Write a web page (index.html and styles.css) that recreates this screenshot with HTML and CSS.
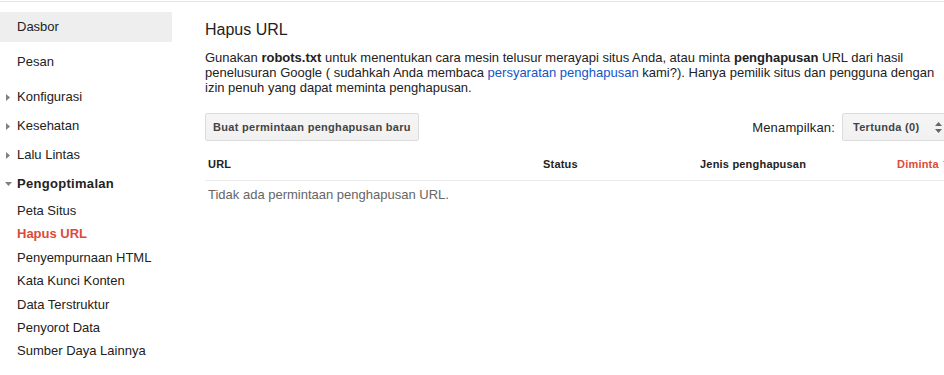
FILE: index.html
```html
<!DOCTYPE html>
<html lang="id">
<head>
<meta charset="utf-8">
<title>Hapus URL</title>
<link rel="stylesheet" href="styles.css">
</head>
<body>
<div class="topline"></div>
<div class="layout">
  <nav class="sidebar">
    <div class="nav-top active">Dasbor</div>
    <div class="nav-top">Pesan</div>
    <div class="nav-sec"><span class="tri"><svg width="4" height="7" viewBox="0 0 4 7"><path d="M0 0L4 3.5L0 7Z" fill="#808080"/></svg></span>Konfigurasi</div>
    <div class="nav-sec"><span class="tri"><svg width="4" height="7" viewBox="0 0 4 7"><path d="M0 0L4 3.5L0 7Z" fill="#808080"/></svg></span>Kesehatan</div>
    <div class="nav-sec"><span class="tri"><svg width="4" height="7" viewBox="0 0 4 7"><path d="M0 0L4 3.5L0 7Z" fill="#808080"/></svg></span>Lalu Lintas</div>
    <div class="nav-sec open"><span class="tri down"><svg width="7" height="4" viewBox="0 0 7 4"><path d="M0 0L7 0L3.5 4Z" fill="#808080"/></svg></span>Pengoptimalan</div>
    <div class="nav-sub">Peta Situs</div>
    <div class="nav-sub current">Hapus URL</div>
    <div class="nav-sub">Penyempurnaan HTML</div>
    <div class="nav-sub">Kata Kunci Konten</div>
    <div class="nav-sub">Data Terstruktur</div>
    <div class="nav-sub">Penyorot Data</div>
    <div class="nav-sub">Sumber Daya Lainnya</div>
  </nav>
  <main class="main">
    <h1 class="title">Hapus URL</h1>
    <p class="intro">Gunakan <b>robots.txt</b> untuk menentukan cara mesin telusur merayapi situs Anda, atau minta <b>penghapusan</b> URL dari hasil penelusuran Google ( sudahkah Anda membaca <a href="#">persyaratan penghapusan</a> kami?). Hanya pemilik situs dan pengguna dengan izin penuh yang dapat meminta penghapusan.</p>
    <div class="toolbar">
      <button class="btn">Buat permintaan penghapusan baru</button>
      <div class="filter">
        <span class="filter-label">Menampilkan:</span>
        <div class="select"><span>Tertunda (0)</span><svg class="updown" width="7" height="11" viewBox="0 0 7 11"><path d="M0 4L3.5 0L7 4Z M0 7L7 7L3.5 11Z" fill="#666"/></svg></div>
      </div>
    </div>
    <div class="table">
      <div class="row head">
        <div class="cell c1">URL</div>
        <div class="cell c2">Status</div>
        <div class="cell c3">Jenis penghapusan</div>
        <div class="cell c4 sorted">Diminta <svg class="sort" width="9" height="5" viewBox="0 0 9 5"><path d="M0 0L9 0L4.5 5Z" fill="#dd4b39"/></svg></div>
      </div>
      <div class="empty">Tidak ada permintaan penghapusan URL.</div>
    </div>
  </main>
</div>
</body>
</html>
```
FILE: styles.css
```css
html, body {
  margin: 0;
  padding: 0;
  background: #fff;
  overflow: hidden;
}
body {
  font-family: Arial, "Liberation Sans", sans-serif;
  font-size: 13px;
  color: #222;
  width: 944px;
  height: 375px;
}
.topline {
  height: 1px;
  margin-top: 1px;
  background: #e5e5e5;
}
.layout {
  display: grid;
  grid-template-columns: 172px 760px;
  column-gap: 33px;
}
.sidebar {
  padding-top: 10px;
}
.nav-top {
  height: 30px;
  line-height: 30px;
  padding-left: 17px;
  margin-bottom: 5px;
}
.nav-top.active {
  background: #eeeeee;
}
.nav-sec {
  height: 29px;
  line-height: 29px;
  display: flex;
  align-items: center;
}
.nav-sec.open {
  font-weight: bold;
  letter-spacing: 0.3px;
  margin-bottom: 1px;
}
.tri {
  width: 17px;
  padding-left: 6px;
  box-sizing: border-box;
  display: flex;
  align-items: center;
  height: 29px;
}
.tri svg { display: block; margin-top: 1px; }
.tri.down { padding-left: 5px; }
.tri.down svg { margin-top: 0; }
.nav-sub {
  height: 23.4px;
  line-height: 23.4px;
  padding-left: 17px;
}
.nav-sub.current {
  color: #dd4b39;
  font-weight: bold;
}
.main {
  padding-top: 18px;
}
.title {
  margin: 0;
  font-size: 16px;
  font-weight: normal;
  line-height: 20px;
  color: #222;
}
.intro {
  margin: 10px 0 0;
  line-height: 15px;
  width: 745px;
}
.intro a {
  color: #15c;
  text-decoration: none;
}
.toolbar {
  margin-top: 18px;
  width: 745px;
  display: flex;
  justify-content: space-between;
  align-items: center;
}
.btn {
  font-family: Arial, "Liberation Sans", sans-serif;
  font-size: 11px;
  font-weight: bold;
  letter-spacing: 0.3px;
  color: #444;
  height: 28px;
  padding: 0 7px;
  border: 1px solid #dcdcdc;
  border-radius: 2px;
  background: linear-gradient(#f5f5f5, #f1f1f1);
  margin: 0;
}
.filter {
  display: flex;
  align-items: center;
  gap: 7px;
}
.filter-label {
  letter-spacing: 0.15px;
}
.select {
  box-sizing: border-box;
  width: 108px;
  height: 28px;
  border: 1px solid #dcdcdc;
  border-radius: 2px;
  background: linear-gradient(#f5f5f5, #f1f1f1);
  display: flex;
  align-items: center;
  padding-left: 10px;
  font-size: 11px;
  font-weight: bold;
  letter-spacing: 0.3px;
  color: #444;
}
.updown {
  margin-left: 16px;
}
.table {
  margin-top: 10px;
  width: 760px;
}
.row.head {
  display: flex;
  border-bottom: 1px solid #ebebeb;
  font-size: 11px;
  font-weight: bold;
  letter-spacing: 0.2px;
  color: #222;
  line-height: 13px;
}
.cell {
  padding: 7px 3px 9px;
}
.c1 { width: 335px; box-sizing: border-box; }
.c2 { width: 157px; box-sizing: border-box; }
.c3 { width: 197px; box-sizing: border-box; }
.c4 { flex: 1; white-space: nowrap; }
.sorted { color: #dd4b39; }
.sort { vertical-align: 2px; margin-left: 1px; }
.empty {
  padding: 6px 3px;
  line-height: 15px;
  color: #666;
}
```
